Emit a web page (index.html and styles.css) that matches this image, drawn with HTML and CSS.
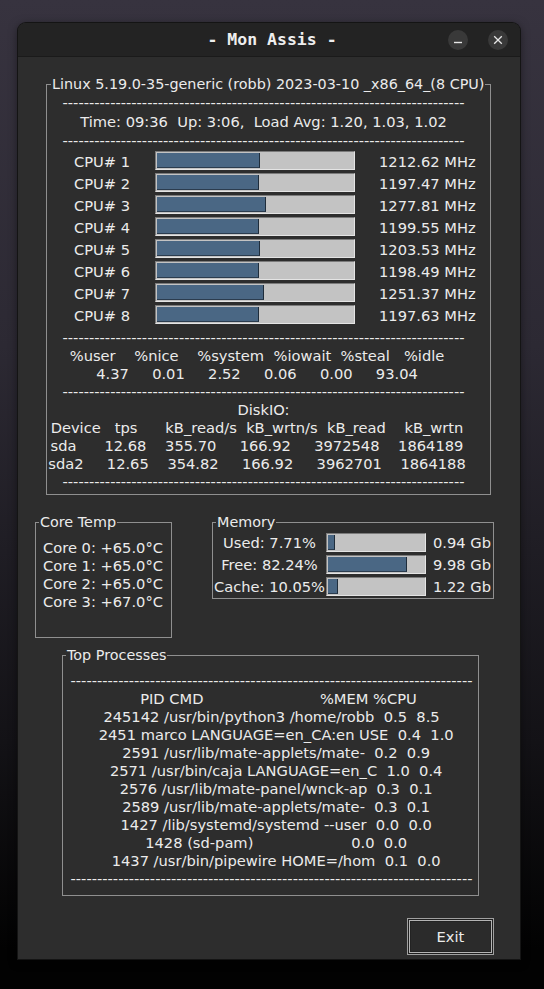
FILE: index.html
```html
<!DOCTYPE html>
<html lang="fr">
<head>
<meta charset="utf-8">
<title>Mon Assis</title>
<link rel="stylesheet" href="styles.css">
</head>
<body>
<div class="window">
  <header class="titlebar">
    <div class="tb-side"></div>
    <div class="title">- Mon Assis -</div>
    <div class="wm-buttons">
      <span class="wm-btn"><svg width="20" height="20" viewBox="0 0 20 20"><path d="M6 12.5h8" stroke="#e6e6e6" stroke-width="1.4" fill="none"/></svg></span>
      <span class="wm-btn"><svg width="20" height="20" viewBox="0 0 20 20"><path d="M6.2 6.2l7.6 7.6M13.8 6.2l-7.6 7.6" stroke="#e6e6e6" stroke-width="1.3" fill="none"/></svg></span>
    </div>
  </header>
  <main class="content">
    <fieldset class="frame frame-sys">
      <legend>Linux 5.19.0-35-generic (robb) 2023-03-10 _x86_64_(8 CPU)</legend>
      <div class="body-sys">
        <div class="line tall">----------------------------------------------------------------------------</div>
        <div class="line tall">Time: 09:36  Up: 3:06,  Load Avg: 1.20, 1.03, 1.02</div>
        <div class="line tall">----------------------------------------------------------------------------</div>
        <div class="cpus">
          <span class="cpu-label">CPU# 1</span><div class="bar"><div class="fill" style="width:52.7%"></div></div><span class="cpu-val">1212.62 MHz</span>
          <span class="cpu-label">CPU# 2</span><div class="bar"><div class="fill" style="width:52.1%"></div></div><span class="cpu-val">1197.47 MHz</span>
          <span class="cpu-label">CPU# 3</span><div class="bar"><div class="fill" style="width:55.6%"></div></div><span class="cpu-val">1277.81 MHz</span>
          <span class="cpu-label">CPU# 4</span><div class="bar"><div class="fill" style="width:52.2%"></div></div><span class="cpu-val">1199.55 MHz</span>
          <span class="cpu-label">CPU# 5</span><div class="bar"><div class="fill" style="width:52.3%"></div></div><span class="cpu-val">1203.53 MHz</span>
          <span class="cpu-label">CPU# 6</span><div class="bar"><div class="fill" style="width:52.1%"></div></div><span class="cpu-val">1198.49 MHz</span>
          <span class="cpu-label">CPU# 7</span><div class="bar"><div class="fill" style="width:54.4%"></div></div><span class="cpu-val">1251.37 MHz</span>
          <span class="cpu-label">CPU# 8</span><div class="bar"><div class="fill" style="width:52.1%"></div></div><span class="cpu-val">1197.63 MHz</span>
        </div>
        <div class="stats">
          <div class="line">----------------------------------------------------------------------------</div>
          <div class="line shifted">%user    %nice    %system  %iowait  %steal   %idle</div>
          <div class="line shifted">4.37     0.01     2.52     0.06     0.00     93.04</div>
          <div class="line">----------------------------------------------------------------------------</div>
          <div class="line">DiskIO:</div>
          <div class="line shifted">Device   tps      kB_read/s  kB_wrtn/s  kB_read    kB_wrtn</div>
          <div class="line shifted">sda      12.68    355.70     166.92     3972548    1864189</div>
          <div class="line shifted">sda2     12.65    354.82     166.92     3962701    1864188</div>
          <div class="line">----------------------------------------------------------------------------</div>
        </div>
      </div>
    </fieldset>

    <div class="row-mid">
      <fieldset class="frame frame-temp">
        <legend>Core Temp</legend>
        <div class="body-temp">
          <div class="tline">Core 0: +65.0°C</div>
          <div class="tline">Core 1: +65.0°C</div>
          <div class="tline">Core 2: +65.0°C</div>
          <div class="tline">Core 3: +67.0°C</div>
        </div>
      </fieldset>
      <fieldset class="frame frame-mem">
        <legend>Memory</legend>
        <div class="body-mem">
          <span class="mem-label">Used: 7.71%</span><div class="bar bar-mem"><div class="fill" style="width:7.71%"></div></div><span class="mem-val">0.94 Gb</span>
          <span class="mem-label">Free: 82.24%</span><div class="bar bar-mem"><div class="fill" style="width:82.24%"></div></div><span class="mem-val">9.98 Gb</span>
          <span class="mem-label">Cache: 10.05%</span><div class="bar bar-mem"><div class="fill" style="width:10.05%"></div></div><span class="mem-val">1.22 Gb</span>
        </div>
      </fieldset>
    </div>

    <fieldset class="frame frame-proc">
      <legend>Top Processes</legend>
      <div class="body-proc">
        <div class="line">----------------------------------------------------------------------------</div>
        <div class="line">   PID CMD                         %MEM %CPU</div>
        <div class="line">245142 /usr/bin/python3 /home/robb  0.5  8.5</div>
        <div class="line">  2451 marco LANGUAGE=en_CA:en USE  0.4  1.0</div>
        <div class="line">  2591 /usr/lib/mate-applets/mate-  0.2  0.9</div>
        <div class="line">  2571 /usr/bin/caja LANGUAGE=en_C  1.0  0.4</div>
        <div class="line">  2576 /usr/lib/mate-panel/wnck-ap  0.3  0.1</div>
        <div class="line">  2589 /usr/lib/mate-applets/mate-  0.3  0.1</div>
        <div class="line">  1427 /lib/systemd/systemd --user  0.0  0.0</div>
        <div class="line">  1428 (sd-pam)                     0.0  0.0</div>
        <div class="line">  1437 /usr/bin/pipewire HOME=/hom  0.1  0.0</div>
        <div class="line">----------------------------------------------------------------------------</div>
      </div>
    </fieldset>

    <button class="exit" type="button">Exit</button>
  </main>
</div>
</body>
</html>
```

FILE: styles.css
```css
* { box-sizing: border-box; }

html, body {
  margin: 0;
  height: 100%;
}

body {
  background: linear-gradient(180deg, #37333f 0%, #2c2933 35%, #131216 75%, #020202 96%);
  font-family: "DejaVu Sans", sans-serif;
  font-size: 14.67px;
  color: #ebebeb;
  overflow: hidden;
}

.window {
  margin: 23px 0 0 18px;
  width: 502px;
  height: 936px;
  background: #2d2d2d;
  border-radius: 8px 8px 0 0;
  display: flex;
  flex-direction: column;
  box-shadow: 0 0 0 1px #141414, 0 2px 10px rgba(0, 0, 0, 0.5);
}

.titlebar {
  flex: none;
  height: 34px;
  display: grid;
  grid-template-columns: 1fr auto 1fr;
  align-items: center;
  background: #232323;
  border-bottom: 1px solid #1a1a1a;
  border-radius: 8px 8px 0 0;
}

.title {
  font-family: "DejaVu Sans Mono", monospace;
  font-weight: bold;
  font-size: 16.5px;
  color: #eeeeee;
  padding-left: 6px;
}

.wm-buttons {
  justify-self: end;
  display: flex;
  gap: 20px;
  padding-right: 12px;
  padding-top: 1px;
}

.wm-btn {
  width: 20px;
  height: 20px;
  border-radius: 50%;
  background: #393939;
  display: flex;
}

.content {
  flex: 1;
  display: flex;
  flex-direction: column;
  padding-top: 18px;
  line-height: 18px;
}

.frame {
  margin: 0;
  padding: 0;
  border: 1px solid #8f8f8f;
  min-width: 0;
}

.frame > legend {
  font-size: 14.35px;
  line-height: 18px;
  padding: 0 1px;
  margin-left: 3px;
}

.line {
  white-space: pre;
  text-align: center;
  height: 18px;
}

.line.tall {
  height: 19px;
  line-height: 19px;
}

/* system frame */
.frame-sys {
  margin-left: 28px;
  width: 445px;
}

.frame-sys > legend { margin-left: 4px; }

.body-sys {
  padding: 0 10px 3px 0;
}

.line.shifted {
  padding-right: 13px;
}

.cpus {
  display: grid;
  grid-template-columns: 81px 200px auto;
  grid-auto-rows: 22px;
  column-gap: 0;
  margin-left: 27px;
  align-items: center;
}

.cpu-label, .cpu-val { padding-top: 1px; }

.cpu-val { margin-left: 24px; }

.bar {
  height: 19px;
  align-self: start;
  margin-top: 1px;
  background: #c3c3c3;
  border: 1px solid;
  border-color: #7b7b7b #e4e4e4 #e4e4e4 #7b7b7b;
  padding: 1px;
}

.fill {
  height: 100%;
  background: #4a6784;
  border-right: 1px solid #1f2d3b;
  border-bottom: 1px solid #2b3c4e;
}

.stats { margin-top: 3px; }

/* middle row */
.row-mid {
  display: flex;
  align-items: flex-start;
  gap: 40px;
  margin-top: 18px;
  padding-left: 17px;
}

.frame-temp { width: 137px; }

.body-temp {
  padding: 8px 0 26px 7px;
}

.tline { white-space: pre; height: 18px; }

.frame-mem { width: 282px; }

.body-mem {
  display: grid;
  grid-template-columns: 113px 100px auto;
  grid-auto-rows: 22px;
  align-items: center;
  padding-top: 1px;
}

.mem-label { text-align: center; white-space: pre; }
.mem-val { margin-left: 7px; }

/* processes */
.frame-proc {
  margin-top: 8px;
  margin-left: 44px;
  width: 417px;
}

.body-proc {
  padding: 8px 0 7px 2px;
}

/* exit */
.exit {
  align-self: flex-end;
  margin: 22px 26px 0 0;
  width: 87px;
  height: 37px;
  font: inherit;
  color: #ebebeb;
  background: #2b2b2b;
  border: 1px solid #a0a0a0;
  box-shadow: inset 0 0 0 1px #1f1f1f, inset 0 0 0 2px #b4b4b4, inset 0 0 0 3px #232323;
  padding: 0;
}
```
